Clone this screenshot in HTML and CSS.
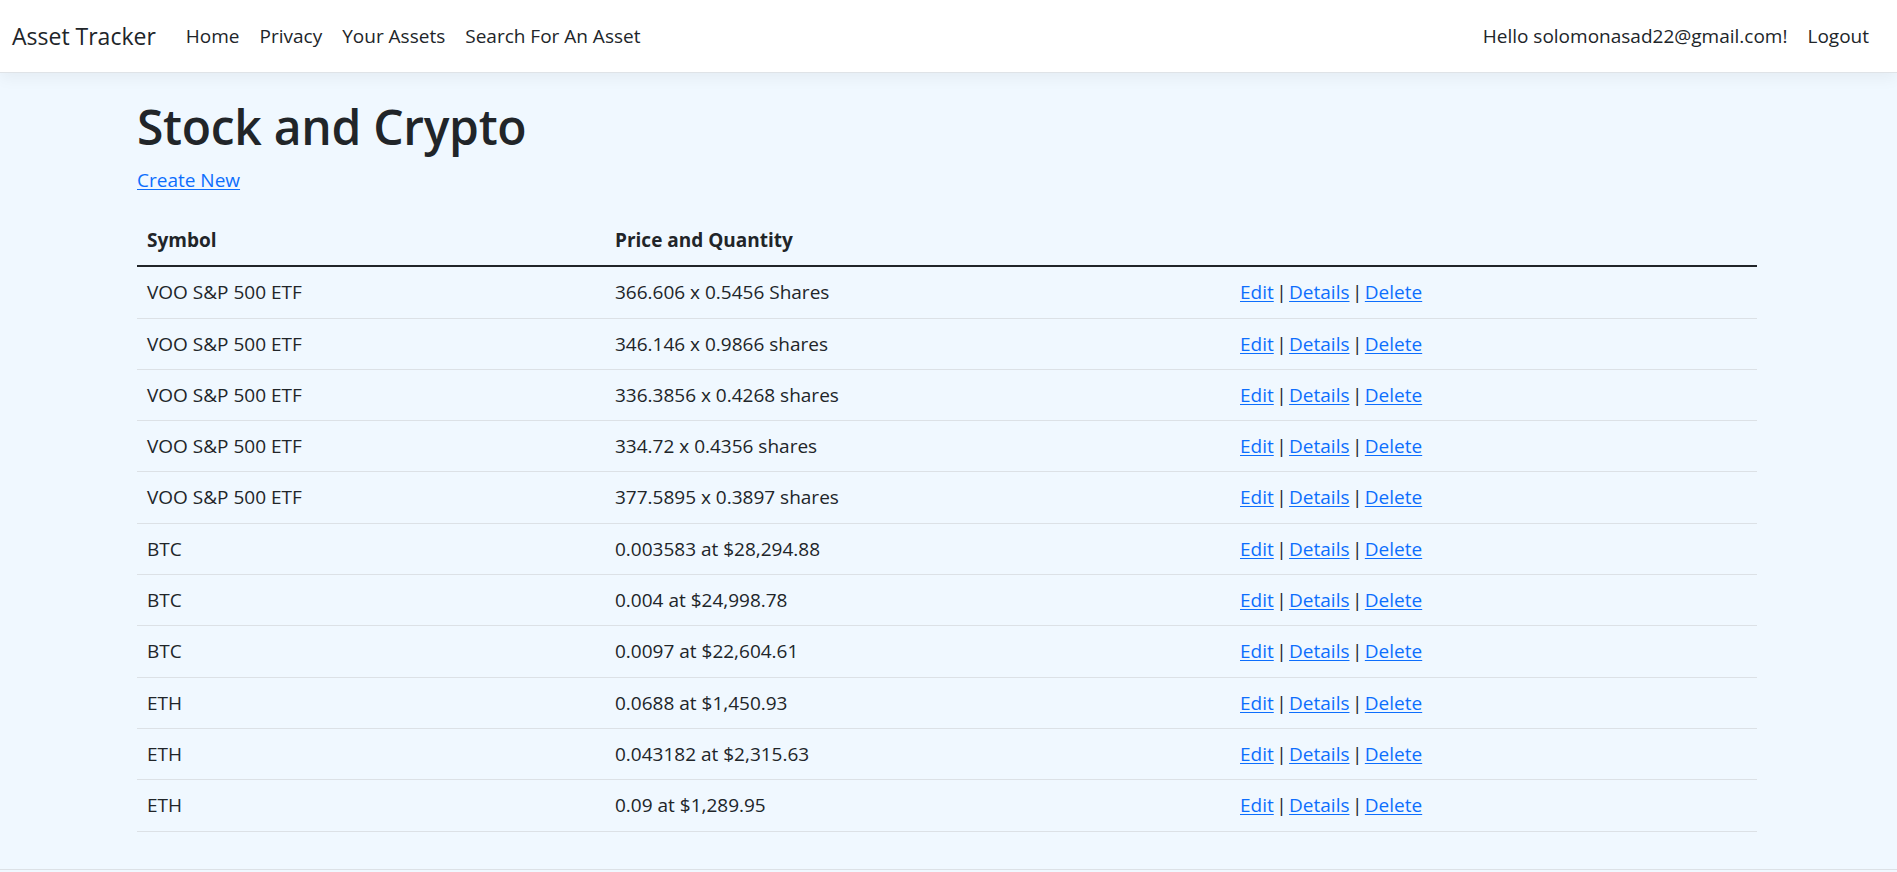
FILE: index.html
```html
<!DOCTYPE html>
<html lang="en">
<head>
<meta charset="utf-8">
<title>Index - Asset Tracker</title>
<link rel="stylesheet" href="styles.css">
</head>
<body>
<header>
  <nav class="navbar">
    <div class="nav-inner">
      <a class="brand" href="#">Asset Tracker</a>
      <ul class="nav-list nav-main">
        <li><a class="nav-link" href="#">Home</a></li>
        <li><a class="nav-link" href="#">Privacy</a></li>
        <li><a class="nav-link" href="#">Your Assets</a></li>
        <li><a class="nav-link" href="#">Search For An Asset</a></li>
      </ul>
      <ul class="nav-list nav-user">
        <li><a class="nav-link" href="#">Hello solomonasad22@gmail.com!</a></li>
        <li><a class="nav-link" href="#">Logout</a></li>
      </ul>
    </div>
  </nav>
</header>
<div class="container">
  <main class="main">
    <h1 class="title">Stock and Crypto</h1>
    <p class="actions-top"><a class="link" href="#">Create New</a></p>
    <table class="table">
      <colgroup>
        <col class="col-symbol">
        <col class="col-price">
        <col class="col-actions">
      </colgroup>
      <thead>
        <tr><th>Symbol</th><th>Price and Quantity</th><th></th></tr>
      </thead>
      <tbody>
        <tr><td>VOO S&amp;P 500 ETF</td><td>366.606 x 0.5456 Shares</td><td class="row-actions"><a class="link" href="#">Edit</a> | <a class="link" href="#">Details</a> | <a class="link" href="#">Delete</a></td></tr>
        <tr><td>VOO S&amp;P 500 ETF</td><td>346.146 x 0.9866 shares</td><td class="row-actions"><a class="link" href="#">Edit</a> | <a class="link" href="#">Details</a> | <a class="link" href="#">Delete</a></td></tr>
        <tr><td>VOO S&amp;P 500 ETF</td><td>336.3856 x 0.4268 shares</td><td class="row-actions"><a class="link" href="#">Edit</a> | <a class="link" href="#">Details</a> | <a class="link" href="#">Delete</a></td></tr>
        <tr><td>VOO S&amp;P 500 ETF</td><td>334.72 x 0.4356 shares</td><td class="row-actions"><a class="link" href="#">Edit</a> | <a class="link" href="#">Details</a> | <a class="link" href="#">Delete</a></td></tr>
        <tr><td>VOO S&amp;P 500 ETF</td><td>377.5895 x 0.3897 shares</td><td class="row-actions"><a class="link" href="#">Edit</a> | <a class="link" href="#">Details</a> | <a class="link" href="#">Delete</a></td></tr>
        <tr><td>BTC</td><td>0.003583 at $28,294.88</td><td class="row-actions"><a class="link" href="#">Edit</a> | <a class="link" href="#">Details</a> | <a class="link" href="#">Delete</a></td></tr>
        <tr><td>BTC</td><td>0.004 at $24,998.78</td><td class="row-actions"><a class="link" href="#">Edit</a> | <a class="link" href="#">Details</a> | <a class="link" href="#">Delete</a></td></tr>
        <tr><td>BTC</td><td>0.0097 at $22,604.61</td><td class="row-actions"><a class="link" href="#">Edit</a> | <a class="link" href="#">Details</a> | <a class="link" href="#">Delete</a></td></tr>
        <tr><td>ETH</td><td>0.0688 at $1,450.93</td><td class="row-actions"><a class="link" href="#">Edit</a> | <a class="link" href="#">Details</a> | <a class="link" href="#">Delete</a></td></tr>
        <tr><td>ETH</td><td>0.043182 at $2,315.63</td><td class="row-actions"><a class="link" href="#">Edit</a> | <a class="link" href="#">Details</a> | <a class="link" href="#">Delete</a></td></tr>
        <tr><td>ETH</td><td>0.09 at $1,289.95</td><td class="row-actions"><a class="link" href="#">Edit</a> | <a class="link" href="#">Details</a> | <a class="link" href="#">Delete</a></td></tr>
      </tbody>
    </table>
  </main>
</div>
<footer class="footer"></footer>
</body>
</html>
```
FILE: styles.css
```css
* { box-sizing: border-box; }

html, body {
  margin: 0;
  padding: 0;
}

body {
  background: #f0f8ff;
  color: #212529;
  font-family: "Open Sans", "Noto Sans", sans-serif;
  font-size: 19px;
  line-height: 30px;
}

.navbar {
  background: #ffffff;
  border-bottom: 1px solid #dfe3e7;
  box-shadow: 0 5px 15px rgba(0, 0, 0, 0.05);
  height: 73px;
}

.nav-inner {
  display: flex;
  align-items: center;
  height: 72px;
  padding: 0 18px 0 12px;
}

.brand {
  color: #212529;
  text-decoration: none;
  font-size: 23px;
  line-height: 37px;
  margin-right: 20px;
}

.nav-list {
  display: flex;
  list-style: none;
  margin: 0;
  padding: 0;
}

.nav-user {
  margin-left: auto;
}

.nav-link {
  display: block;
  color: #212529;
  text-decoration: none;
  padding: 10px 10px;
  line-height: 30px;
}

.container {
  width: 1620px;
  margin-left: 137px;
}

.main {
  padding-top: 22px;
  padding-bottom: 17px;
}

.title {
  font-size: 48px;
  font-weight: 600;
  line-height: 60px;
  padding-top: 2px;
  margin: 0 0 8px;
  letter-spacing: -0.3px;
}

.actions-top {
  margin: 0 0 20px;
}

.link {
  color: #0d6efd;
  text-decoration: underline;
  text-underline-offset: 2px;
}

.table {
  width: 1620px;
  border-collapse: collapse;
  table-layout: fixed;
  margin-bottom: 20px;
}

.col-symbol { width: 468px; }
.col-price { width: 625px; }
.col-actions { width: 527px; }

.table th,
.table td {
  text-align: left;
  vertical-align: top;
  padding: 10px 10px 10.3px;
  line-height: 30px;
  border-bottom: 1px solid #dce1e6;
}

.table th {
  font-weight: 700;
}

.table thead th {
  border-bottom: 2px solid #212529;
}

.row-actions {
  word-spacing: -2.5px;
}

.footer {
  border-top: 1px solid #dce1e6;
  height: 60px;
}
```
